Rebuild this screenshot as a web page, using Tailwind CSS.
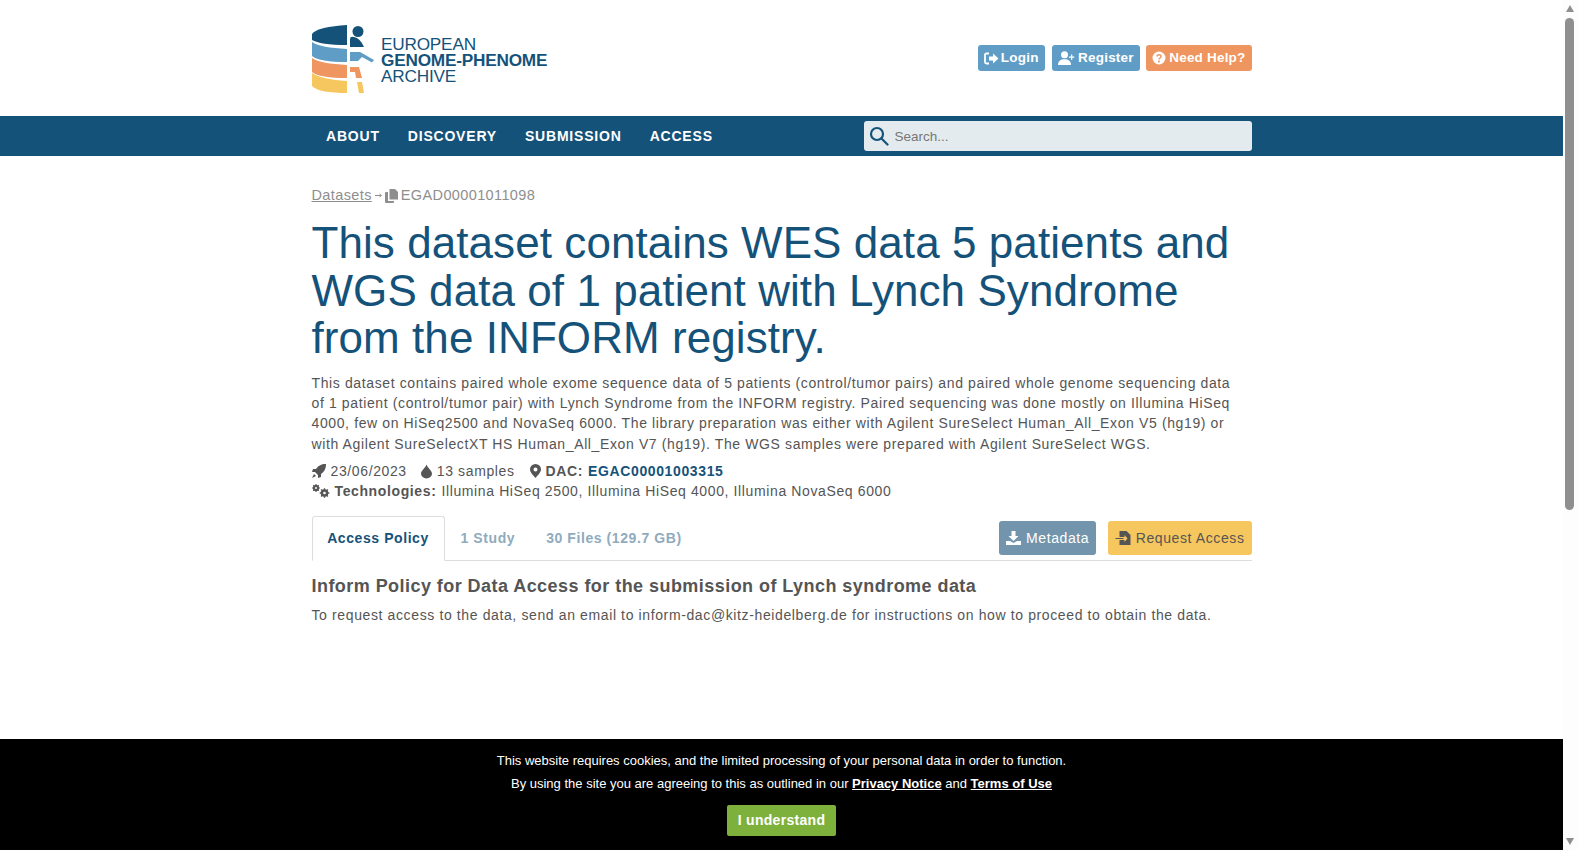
<!DOCTYPE html>
<html lang="en"><head><meta charset="utf-8"><title>EGA</title>
<script src="https://cdn.jsdelivr.net/npm/@tailwindcss/browser@4"></script></head>
<body class="bg-white overflow-hidden font-['Liberation_Sans',Arial,sans-serif] text-[#555] text-[14px]">
<div class="flex h-[850px] w-[1578px] overflow-hidden">
<div class="relative w-[1563px] h-[850px] overflow-hidden">
  <header class="h-[116px] flex justify-center">
    <div class="w-[940px] flex items-center justify-between">
      <a class="flex items-center mt-[4px]">
        <svg width="70" height="70" viewBox="0 0 70 70" class="block">
          <path d="M0 9 C3 4 17 1 35 0 V20 C17 20 5 18 0 15 Z" fill="#15527a"/>
          <path d="M0 17 C6 21 18 23 35 24 V37 C17 37 5 35 0 31 Z" fill="#609dc6"/>
          <path d="M0 33 C6 37 18 39 35 40 V53 C17 53 5 51 0 47 Z" fill="#ee9560"/>
          <path d="M0 48 C6 52 18 55 35 56 V68 C17 68 5 66 0 61 Z" fill="#f6c75e"/>
          <circle cx="46" cy="6.500" r="5.500" fill="#15527a"/>
          <path d="M38 14 Q38 11 42 12 Q48 13 52 22 H38 Z" fill="#15527a"/>
          <path d="M38 27 H48 L62 35 L60 37.500 L50 32 L46 36 H38 Z" fill="#609dc6"/>
          <path d="M38 42 H47 L50 53 H44 L43 47 H38 Z" fill="#ee9560"/>
          <path d="M45 57 H50 L52 68 H47 Z" fill="#f6c75e"/>
        </svg>
        <div class="ml-[-0.5px] text-[#15527a] text-[17.2px] leading-[16px] tracking-[-0.2px]">
          <div>EUROPEAN</div><div class="font-bold">GENOME-PHENOME</div><div>ARCHIVE</div>
        </div>
      </a>
      <div class="flex items-center gap-[6px] text-[13.5px] font-bold text-white tracking-[0.2px]">
        <a class="h-[26px] px-[6px] flex items-center gap-[2px] rounded-[3px] bg-[#609dc6]">
          <svg width="15" height="13" viewBox="0 0 15 13" fill="none"><path d="M5 1.500H2.500Q1 1.500 1 3V10Q1 11.500 2.500 11.500H5" stroke="#fff" stroke-width="1.800"/><path d="M5 4.500H9V1.500L14.500 6.500L9 11.500V8.500H5Z" fill="#fff"/></svg>Login</a>
        <a class="ml-[1px] h-[26px] px-[6.5px] flex items-center gap-[3px] rounded-[3px] bg-[#609dc6]">
          <svg width="17" height="14" viewBox="0 0 17 14" fill="#fff"><circle cx="6.500" cy="3.800" r="3.500"/><path d="M0 14C0 10 2.500 8.200 6.500 8.200S13 10 13 14Z"/><path d="M13 3.500h1.300v2h2v1.300h-2v2H13v-2h-2V5.500h2Z"/></svg>Register</a>
        <a class="h-[26px] px-[6px] flex items-center gap-[3px] rounded-[3px] bg-[#ee9560]">
          <svg width="14" height="14" viewBox="0 0 14 14"><circle cx="7" cy="7" r="6.500" fill="#fff"/><path d="M5 5.500C5 3 9 3 9 5.500C9 7 7 7 7 8.500" fill="none" stroke="#ee9560" stroke-width="1.500"/><circle cx="7" cy="10.500" r="1" fill="#ee9560"/></svg>Need Help?</a>
      </div>
    </div>
  </header>
  <nav class="h-[40px] bg-[#15527a] flex justify-center">
    <div class="w-[940px] flex items-center justify-between">
      <div class="flex pl-[14.5px] gap-[28px] text-[14px] font-bold text-white tracking-[0.8px]"><a>ABOUT</a><a>DISCOVERY</a><a>SUBMISSION</a><a>ACCESS</a></div>
      <div class="w-[388px] h-[30px] rounded-[3px] bg-[#e3ebee] flex items-center pl-[5px] gap-[6px]">
        <svg width="20" height="20" viewBox="0 0 20 20" fill="none" stroke="#15527a" stroke-width="2.200"><circle cx="8" cy="8" r="6"/><path d="M12.500 12.500L18.500 18.500" stroke-linecap="round"/></svg>
        <span class="text-[#777] text-[13.5px] pt-[2px]">Search...</span>
      </div>
    </div>
  </nav>
  <main class="w-[940px] mx-auto pt-[31px]">
    <div class="h-[17px] flex items-center text-[#8e8e8e] text-[14.5px] tracking-[0.38px]">
      <a class="underline">Datasets</a>
      <svg width="7" height="7" viewBox="0 0 7 7" fill="none" class="ml-[3px] mr-[3px]"><path d="M0 3.500H6M4.500 2L6.500 3.500L4.500 5" stroke="#8e8e8e" stroke-width="1"/></svg>
      <svg width="13" height="14" viewBox="0 0 13 14" fill="#8e8e8e" class="mr-[3px]"><path d="M4.500 0H10L13 3V10.500H4.500Z"/><path d="M3 3H1Q0 3 0 4V13Q0 14 1 14H8Q9 14 9 13V12H3Z"/></svg>
      <span>EGAD00001011098</span>
    </div>
    <h1 class="mt-[15px] text-[#15527a] text-[44px] leading-[47.5px] tracking-[0.07px]">This dataset contains WES data 5 patients and WGS data of 1 patient with Lynch Syndrome from the INFORM registry.</h1>
    <p class="mt-[11.5px] w-[925px] text-[14px] leading-[20.2px] tracking-[0.62px]">This dataset contains paired whole exome sequence data of 5 patients (control/tumor pairs) and paired whole genome sequencing data of 1 patient (control/tumor pair) with Lynch Syndrome from the INFORM registry. Paired sequencing was done mostly on Illumina HiSeq 4000, few on HiSeq2500 and NovaSeq 6000. The library preparation was either with Agilent SureSelect Human_All_Exon V5 (hg19) or with Agilent SureSelectXT HS Human_All_Exon V7 (hg19). The WGS samples were prepared with Agilent SureSelect WGS.</p>
    <div class="mt-[7.5px] h-[20px] flex items-center tracking-[0.62px]">
      <svg width="14" height="14" viewBox="0 0 14 14" fill="#555" class="mr-[5px]"><path d="M14 0C9 0 6 2 4 5H1L0 8H3L6 11V14L9 13V10C12 8 14 5 14 0Z"/><path d="M2 10L4 12L0 14Z"/></svg>
      <span>23/06/2023</span>
      <svg width="11" height="15" viewBox="0 0 11 14" fill="#555" class="ml-[14px] mr-[5px]"><path d="M5.500 0C7 4 11 6 11 9A5.500 5 0 0 1 0 9C0 6 4 4 5.500 0Z"/></svg>
      <span>13 samples</span>
      <svg width="11" height="14" viewBox="0 0 11 14" class="ml-[15px] mr-[5px]"><path fill="#555" fill-rule="evenodd" d="M5.500 0A5.500 5.500 0 0 1 11 5.500C11 8.500 7 12 5.500 14C4 12 0 8.500 0 5.500A5.500 5.500 0 0 1 5.500 0ZM5.500 3.500A2 2 0 1 0 5.500 7.500A2 2 0 1 0 5.500 3.500Z"/></svg>
      <b>DAC:</b><b class="ml-[5px] text-[#15527a]">EGAC00001003315</b>
    </div>
    <div class="h-[20px] flex items-center tracking-[0.62px]">
      <svg width="18" height="14" viewBox="0 0 18 14" class="mr-[5px]" fill="none" stroke="#555"><circle cx="4" cy="4" r="2.200" stroke-width="1.800"/><path d="M4 0V8M0 4H8M1.200 1.200L6.800 6.800M6.800 1.200L1.200 6.800" stroke-width="1.200"/><circle cx="4" cy="4" r="1" fill="#fff" stroke="none"/><circle cx="12.500" cy="9" r="2.800" stroke-width="2"/><path d="M12.500 4.200V13.800M7.700 9H17.300M9.100 5.600L15.900 12.400M15.900 5.600L9.100 12.400" stroke-width="1.400"/><circle cx="12.500" cy="9" r="1.300" fill="#fff" stroke="none"/></svg>
      <b>Technologies:</b><span class="ml-[5px]">Illumina HiSeq 2500, Illumina HiSeq 4000, Illumina NovaSeq 6000</span>
    </div>
    <div class="mt-[15px] h-[45px] flex justify-between border-b border-[#ddd]">
      <div class="flex font-bold text-[14px] tracking-[0.58px]">
        <a class="h-[45px] w-[133px] flex items-center justify-center text-[#15527a] bg-white border border-[#ddd] border-b-white rounded-t-[3px]">Access Policy</a>
        <a class="ml-[16px] flex items-center text-[#8fabbd]">1 Study</a>
        <a class="ml-[31px] flex items-center text-[#8fabbd]">30 Files (129.7 GB)</a>
      </div>
      <div class="flex gap-[12px] pt-[5px] text-[14px] tracking-[0.6px]">
        <a class="h-[34px] px-[7px] flex items-center gap-[5px] rounded-[3px] bg-[#7295ad] text-white">
          <svg width="15" height="14" viewBox="0 0 15 14" fill="#fff"><path d="M5.500 0H9.500V5H12.500L7.500 10L2.500 5H5.500Z"/><path d="M0 10H4L7.500 12L11 10H15V14H0Z"/></svg>Metadata</a>
        <a class="h-[34px] pl-[7px] pr-[7px] flex items-center gap-[3.5px] rounded-[3px] bg-[#f6c75e] text-[#555]">
          <svg width="17" height="14" viewBox="0 0 16 14" fill="#555"><path d="M4 0H11L15 4V14H4V9H9V11L12 7.500L9 4V6H4Z"/><path d="M0 7H8V8H0Z"/></svg>Request Access</a>
      </div>
    </div>
    <h2 class="mt-[14px] text-[18px] leading-[22px] font-bold tracking-[0.45px]">Inform Policy for Data Access for the submission of Lynch syndrome data</h2>
    <p class="mt-[8px] leading-[20px] tracking-[0.62px]">To request access to the data, send an email to inform-dac@kitz-heidelberg.de for instructions on how to proceed to obtain the data.</p>
  </main>
  <div class="absolute left-0 right-0 bottom-0 h-[111px] bg-black text-white flex flex-col items-center text-[13px] pt-[11px]">
    <p class="h-[22px] leading-[22px]">This website requires cookies, and the limited processing of your personal data in order to function.</p>
    <p class="mt-[1px] h-[22px] leading-[22px]">By using the site you are agreeing to this as outlined in our <a class="font-bold underline">Privacy Notice</a> and <a class="font-bold underline">Terms of Use</a></p>
    <button class="mt-[10px] w-[109px] h-[31px] rounded-[2px] bg-[#7eb03c] text-white text-[14px] font-bold tracking-[0.3px]">I understand</button>
  </div>
</div>
<aside class="relative w-[15px] h-[850px] bg-[#fdfdfd]">
  <div class="absolute left-[3px] top-[5px] w-0 h-0 border-x-[4.5px] border-x-transparent border-b-[7px] border-b-[#8f8f8f]"></div>
  <div class="absolute left-[2px] top-[18px] w-[9px] h-[492px] rounded-full bg-[#8f8f8f]"></div>
  <div class="absolute left-[3px] bottom-[5px] w-0 h-0 border-x-[4.5px] border-x-transparent border-t-[7px] border-t-[#8f8f8f]"></div>
</aside>
</div>
</body></html>
